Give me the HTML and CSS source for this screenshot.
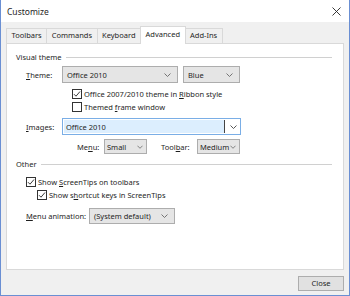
FILE: index.html
```html
<!DOCTYPE html>
<html lang="en">
<head>
  <meta charset="UTF-8" />
  <title>Customize</title>
  <link rel="stylesheet" href="styles.css">
</head>
<body>
  <div class="window">
    <div class="titlebar">
      <span class="title">Customize</span>
      <svg class="close-x" width="9" height="9" viewBox="0 0 9 9"><path d="M0.5 0.5 L8.5 8.5 M8.5 0.5 L0.5 8.5" stroke="#222" stroke-width="0.9" fill="none"/></svg>
    </div>

    <div class="client">
      <div class="tabs">
        <div class="tab">Toolbars</div>
        <div class="tab">Commands</div>
        <div class="tab">Keyboard</div>
        <div class="tab active">Advanced</div>
        <div class="tab">Add-Ins</div>
      </div>

      <div class="panel">
        <div class="group-head"><span>Visual theme</span><div class="rule"></div></div>

        <div class="row r-theme">
          <span class="label"><u>T</u>heme:</span>
          <div class="combo w-theme"><span>Office 2010</span><svg class="chev" width="7" height="4" viewBox="0 0 7 4"><path d="M0.5 0.5 L3.5 3.5 L6.5 0.5" stroke="#666" fill="none" stroke-width="0.9"/></svg></div>
          <div class="combo w-blue"><span>Blue</span><svg class="chev" width="7" height="4" viewBox="0 0 7 4"><path d="M0.5 0.5 L3.5 3.5 L6.5 0.5" stroke="#666" fill="none" stroke-width="0.9"/></svg></div>
        </div>

        <div class="check c-ribbon">
          <span class="box"><svg width="8" height="8" viewBox="0 0 8 8"><path d="M1 4.2 L3 6.2 L7 1.5" stroke="#222" stroke-width="0.9" fill="none"/></svg></span>
          <span>Office 2007/2010 theme in <u>R</u>ibbon style</span>
        </div>
        <div class="check c-frame">
          <span class="box"></span>
          <span>Themed <u>f</u>rame window</span>
        </div>

        <div class="row r-images">
          <span class="label"><u>I</u>mages:</span>
          <div class="edit-combo">
            <div class="edit-text"><span class="sel">Office 2010</span></div>
            <div class="edit-btn"><svg width="7" height="4" viewBox="0 0 7 4"><path d="M0.5 0.5 L3.5 3.5 L6.5 0.5" stroke="#444" fill="none" stroke-width="0.9"/></svg></div>
          </div>
        </div>

        <div class="row r-size">
          <span class="label-sm">Me<u>n</u>u:</span>
          <div class="combo small w-menu"><span>Small</span><svg class="chev" width="6" height="4" viewBox="0 0 7 4"><path d="M0.5 0.5 L3.5 3.5 L6.5 0.5" stroke="#666" fill="none" stroke-width="0.9"/></svg></div>
          <span class="label-sm tb">Tool<u>b</u>ar:</span>
          <div class="combo small w-medium"><span>Medium</span><svg class="chev" width="6" height="4" viewBox="0 0 7 4"><path d="M0.5 0.5 L3.5 3.5 L6.5 0.5" stroke="#666" fill="none" stroke-width="0.9"/></svg></div>
        </div>

        <div class="group-head other"><span>Other</span><div class="rule"></div></div>

        <div class="check c-tips">
          <span class="box"><svg width="8" height="8" viewBox="0 0 8 8"><path d="M1 4.2 L3 6.2 L7 1.5" stroke="#222" stroke-width="0.9" fill="none"/></svg></span>
          <span>Show <u>S</u>creenTips on toolbars</span>
        </div>
        <div class="check c-keys">
          <span class="box"><svg width="8" height="8" viewBox="0 0 8 8"><path d="M1 4.2 L3 6.2 L7 1.5" stroke="#222" stroke-width="0.9" fill="none"/></svg></span>
          <span>Show s<u>h</u>ortcut keys in ScreenTips</span>
        </div>

        <div class="row r-anim">
          <span class="label-anim"><u>M</u>enu animation:</span>
          <div class="combo w-anim"><span>(System default)</span><svg class="chev" width="7" height="4" viewBox="0 0 7 4"><path d="M0.5 0.5 L3.5 3.5 L6.5 0.5" stroke="#666" fill="none" stroke-width="0.9"/></svg></div>
        </div>
      </div>

      <div class="footer">
        <div class="button">Close</div>
      </div>
    </div>
  </div>
</body>
</html>
```

FILE: styles.css
```css
body {
  margin: 0;
  width: 350px;
  height: 296px;
  overflow: hidden;
  font-family: 'Noto Sans', sans-serif;
  font-size: 7.5px;
  color: #1e1e1e;
}

u {
  text-decoration-thickness: 1px;
  text-underline-offset: 1px;
}

.window {
  box-sizing: border-box;
  width: 350px;
  height: 296px;
  background: #f0f0f0;
  border: 1px solid #6a8fd3;
  border-top: none;
  display: flex;
  flex-direction: column;
}

.titlebar {
  height: 22px;
  background: #fff;
  display: flex;
  align-items: center;
  justify-content: space-between;
  padding: 0 8px 0 6px;
  font-size: 8.5px;
}

.client {
  padding: 4px 5px 0 5px;
}

/* Tabs */
.tabs {
  display: flex;
  height: 17px;
  align-items: flex-end;
}

.tab {
  box-sizing: border-box;
  height: 15px;
  line-height: 13px;
  padding: 0 4.5px;
  border: 1px solid #d9d9d9;
  border-bottom: none;
  margin-right: -1px;
  background: #f0f0f0;
}

.tab.active {
  height: 18px;
  background: #fff;
  position: relative;
  z-index: 1;
  margin-bottom: -1px;
  line-height: 15px;
}

.panel {
  box-sizing: border-box;
  height: 227px;
  background: #fff;
  border: 1px solid #d9d9d9;
  padding: 7px 11px 0 9px;
}

/* Group headings */
.group-head {
  display: flex;
  align-items: center;
  height: 12px;
}

.group-head .rule {
  flex: 1;
  height: 1px;
  background: #d0d0d0;
  margin-left: 4px;
}

.group-head.other {
  margin-top: 4px;
}

/* Rows */
.row {
  display: flex;
  align-items: center;
  padding-left: 10px;
}

.label {
  width: 36px;
}

.r-theme {
  margin-top: 3px;
  height: 17px;
}

.combo {
  box-sizing: border-box;
  height: 17px;
  background: #e5e5e5;
  border: 1px solid #adadad;
  display: flex;
  align-items: center;
  justify-content: space-between;
  padding: 0 6px 0 4px;
}

.combo.small {
  height: 15px;
  padding: 0 3px 0 2px;
}

.w-theme { width: 116px; }
.w-blue { width: 57px; margin-left: 5px; }
.w-menu { width: 43px; }
.w-medium { width: 43px; }
.w-anim { width: 86px; }

/* Checkboxes */
.check {
  display: flex;
  align-items: center;
  height: 13px;
}

.box {
  box-sizing: border-box;
  width: 10px;
  height: 10px;
  border: 1px solid #333;
  background: #fff;
  margin-right: 2px;
  display: flex;
  align-items: center;
  justify-content: center;
}

.c-ribbon { margin-top: 4px; padding-left: 56px; }
.c-frame { padding-left: 56px; }
.c-tips { margin-top: 5px; padding-left: 10px; }
.c-keys { padding-left: 21px; }

/* Editable combo */
.r-images {
  margin-top: 5px;
  height: 17px;
}

.edit-combo {
  box-sizing: border-box;
  width: 179px;
  height: 17px;
  border: 1px solid #7aaee6;
  display: flex;
  background: #fff;
}

.edit-text {
  flex: 1;
  display: flex;
  align-items: center;
  padding: 1px;
}

.sel {
  display: flex;
  align-items: center;
  height: 100%;
  width: 100%;
  background: #dceefe;
  border-right: 1px solid #444;
  padding-left: 2px;
}

.edit-btn {
  width: 14px;
  display: flex;
  align-items: center;
  justify-content: center;
}

.r-size {
  margin-top: 4px;
  height: 15px;
  padding-left: 61px;
}

.label-sm {
  width: 27px;
}

.label-sm.tb {
  width: 36px;
  margin-left: 14px;
}

.r-anim {
  margin-top: 7px;
  height: 16px;
}

.r-anim .combo {
  height: 16px;
}

.label-anim {
  width: 63px;
}

/* Footer */
.footer {
  display: flex;
  justify-content: flex-end;
  padding-top: 6px;
}

.button {
  box-sizing: border-box;
  width: 46px;
  height: 15px;
  background: #e1e1e1;
  border: 1px solid #adadad;
  text-align: center;
  line-height: 13px;
}
```
